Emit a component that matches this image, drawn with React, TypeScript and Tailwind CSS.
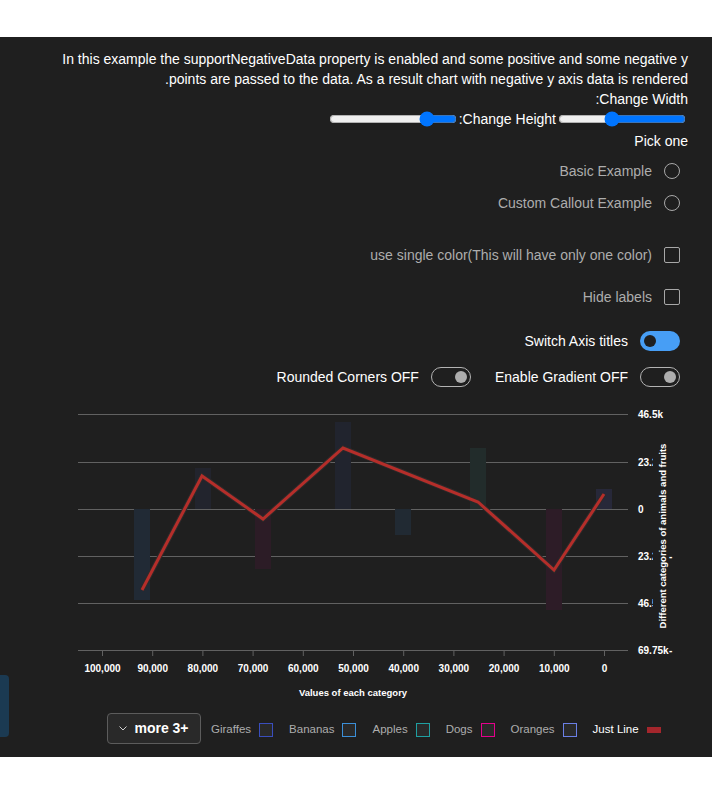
import React from "react";

const bars = [
  { x: 134, y1: 509, y2: 600, c: "#212a35" },
  { x: 195, y1: 468, y2: 509, c: "#22242d" },
  { x: 255, y1: 509, y2: 569, c: "#2c1c26" },
  { x: 335, y1: 422, y2: 509, c: "#21242e" },
  { x: 395, y1: 509, y2: 535, c: "#212a33" },
  { x: 470, y1: 448, y2: 509, c: "#222c2b" },
  { x: 546, y1: 509, y2: 610, c: "#2d1c27" },
  { x: 596, y1: 489, y2: 509, c: "#272839" },
];

const line = "142,590 202,476 263,519 343,448 478,502 554,570 604,494";
const gridY = [414, 462, 509, 556, 603];
const xTicks = ["100,000", "90,000", "80,000", "70,000", "60,000", "50,000", "40,000", "30,000", "20,000", "10,000", "0"];

const legend = [
  { name: "Giraffes", border: "border-[#3a4ebd]" },
  { name: "Bananas", border: "border-[#3b8fd8]" },
  { name: "Apples", border: "border-[#1f9fa1]" },
  { name: "Dogs", border: "border-[#e3008c]" },
  { name: "Oranges", border: "border-[#6a7fe5]" },
];

function Radio({ label }: { label: string }) {
  return (
    <div className="flex items-center gap-3 mr-2 h-5">
      <span className="w-4 h-4 rounded-full border border-[#a8a8a8]" />
      <span className="text-[#adadad]">{label}</span>
    </div>
  );
}

function Check({ label }: { label: string }) {
  return (
    <div className="flex items-center gap-3 mr-2 h-5">
      <span className="w-4 h-4 rounded-[2px] border border-[#a8a8a8]" />
      <span className="text-[#adadad]">{label}</span>
    </div>
  );
}

function Toggle({ label, on }: { label: string; on?: boolean }) {
  return (
    <div className="flex items-center gap-3 h-5">
      {on ? (
        <span className="w-10 h-5 rounded-full bg-[#479ef5] flex items-center justify-end px-[4px]">
          <span className="w-3 h-3 rounded-full bg-[#1f1f1f]" />
        </span>
      ) : (
        <span className="w-10 h-5 rounded-full border border-[#b3b3b3] flex items-center justify-start px-[3px]">
          <span className="w-3 h-3 rounded-full bg-[#adadad]" />
        </span>
      )}
      <span className="text-white">{label}</span>
    </div>
  );
}

export default function App() {
  return (
    <div className="min-h-[793px] bg-white pt-[37px] font-['Segoe_UI','Liberation_Sans',sans-serif] text-[14px]">
      <div className="relative h-[720px] bg-[#1f1f1f] flex flex-col">
        <div dir="rtl" className="px-6 pt-3 text-white leading-5">
          <div>In this example the supportNegativeData property is enabled and some positive and some negative y</div>
          <div>points are passed to the data. As a result chart with negative y axis data is rendered.</div>
          <div>Change Width:</div>
          <div className="flex items-center h-5">
            <input type="range" defaultValue={59} className="w-[128px] mx-[2px]" />
            <span>Change Height:</span>
            <input type="range" defaultValue={19} className="w-[128px] mx-[2px]" />
          </div>
          <div className="mt-[2px] h-5">Pick one</div>
          <div className="mt-[10px]">
            <Radio label="Basic Example" />
          </div>
          <div className="mt-3">
            <Radio label="Custom Callout Example" />
          </div>
          <div className="mt-8">
            <Check label="use single color(This will have only one color)" />
          </div>
          <div className="mt-[22px]">
            <Check label="Hide labels" />
          </div>
          <div className="mt-6 mr-2">
            <Toggle label="Switch Axis titles" on />
          </div>
          <div className="mt-4 mr-2 flex items-center gap-6">
            <Toggle label="Enable Gradient OFF" />
            <Toggle label="Rounded Corners OFF" />
          </div>
        </div>

        <svg
          className="mt-2 block"
          width={712}
          height={310}
          viewBox="0 395 712 310"
          fontFamily="'Segoe UI','Liberation Sans',sans-serif"
        >
          <defs>
            <clipPath id="ylab">
              <rect x={630} y={395} width={23} height={310} />
            </clipPath>
          </defs>
          {gridY.map((y) => (
            <line key={y} x1={78} x2={628} y1={y + 0.5} y2={y + 0.5} stroke="#616161" />
          ))}
          <line x1={78} x2={628} y1={650.5} y2={650.5} stroke="#616161" />
          {xTicks.map((t, i) => {
            const x = 102.5 + i * 50.2;
            return (
              <g key={t}>
                <line x1={x} x2={x} y1={650} y2={656} stroke="#616161" />
                <text x={x} y={672} textAnchor="middle" fontSize={10} fontWeight={700} fill="#fff">
                  {t}
                </text>
              </g>
            );
          })}
          {bars.map((b, i) => (
            <rect key={i} x={b.x} y={b.y1} width={16} height={b.y2 - b.y1} fill={b.c} />
          ))}
          <polyline points={line} fill="none" stroke="#2e2a2a" strokeWidth={5} strokeLinejoin="miter" />
          <polyline points={line} fill="none" stroke="#b52e2a" strokeWidth={3} strokeLinejoin="miter" />

          <g fontSize={10} fontWeight={700} fill="#fff">
            <text x={638} y={418}>46.5k</text>
            <text x={638} y={466} clipPath="url(#ylab)">23.25k</text>
            <text x={638} y={513}>0</text>
            <text x={638} y={560} clipPath="url(#ylab)">23.25k</text>
            <text x={669} y={560}>-</text>
            <text x={638} y={607} clipPath="url(#ylab)">46.5k</text>
            <text x={638} y={654}>69.75k</text>
            <text x={669} y={654}>-</text>
            <text x={353} y={696} textAnchor="middle" fontSize={9.5}>Values of each category</text>
            <text x={662} y={536} textAnchor="middle" fontSize={9.5} transform="rotate(-90 662 536)" dominantBaseline="central">
              Different categories of animals and fruits
            </text>
          </g>
        </svg>

        <div className="mt-2 ml-[107px] flex items-center text-[11.5px]">
          <button className="h-[31px] w-[94px] rounded-[4px] border border-[#5c5c5c] bg-[#292929] flex items-center justify-center gap-[7px] text-white font-semibold text-[14px]">
            <svg width={8} height={5} viewBox="0 0 8 5">
              <polyline points="0.5,0.5 4,4 7.5,0.5" fill="none" stroke="#d0d0d0" strokeWidth={1} />
            </svg>
            <span>more 3+</span>
          </button>
          <div className="ml-[10px] flex items-center gap-4 pt-[2px]">
            {legend.map((l) => (
              <div key={l.name} className="flex items-center gap-2">
                <span className="text-[#adadad]">{l.name}</span>
                <span className={`w-[14px] h-[14px] border bg-[#292929] ${l.border}`} />
              </div>
            ))}
            <div className="flex items-center gap-2">
              <span className="text-white">Just Line</span>
              <span className="w-[14px] h-[6px] bg-[#a4262c]" />
            </div>
          </div>
        </div>

        <div className="absolute left-0 top-[638px] w-[9px] h-[62px] rounded-r-[4px] bg-[#1b3a52]" />
      </div>
    </div>
  );
}
